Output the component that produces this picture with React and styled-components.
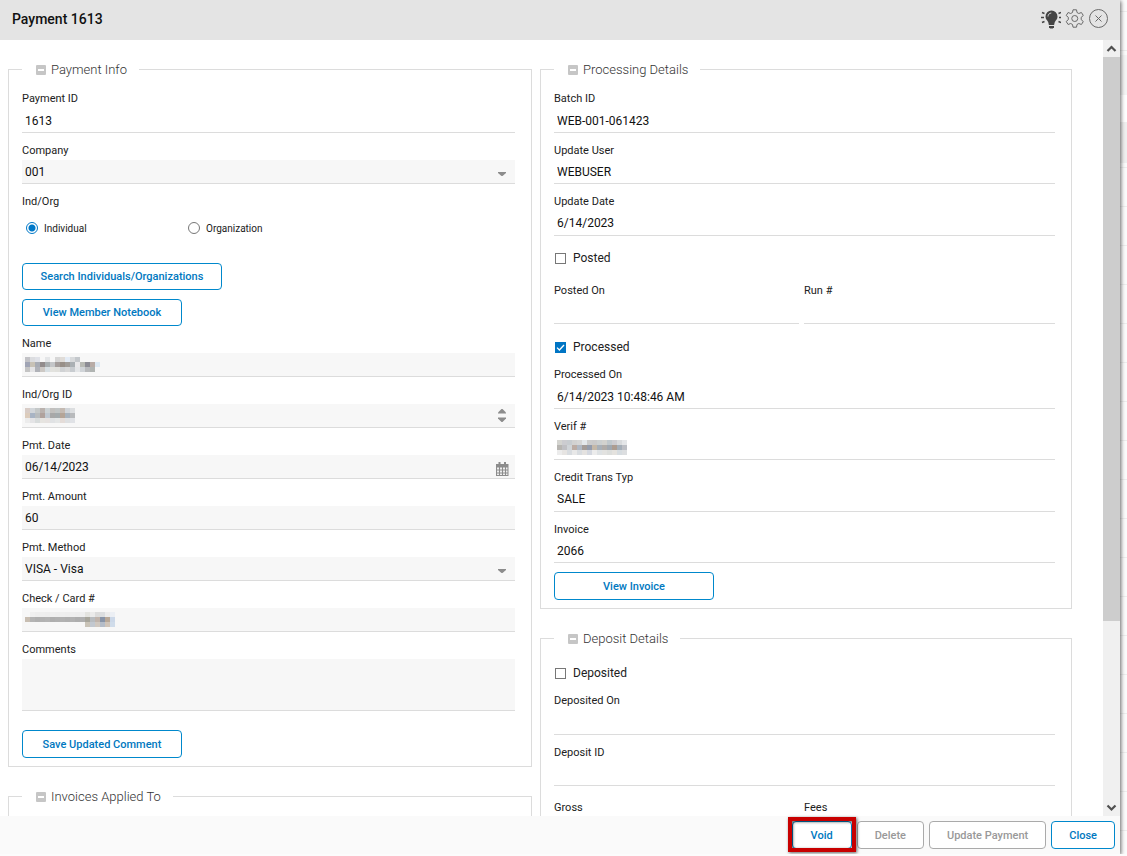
import React from 'react'
import styled, { createGlobalStyle, css } from 'styled-components'

const GlobalStyle = createGlobalStyle`
*{box-sizing:border-box;}
body{
  margin:0;
  overflow:hidden;
  background:
    linear-gradient(transparent 55px,#f5f5f5 55px,#f5f5f5 95px,#fff 95px,#fff 122px,#f0f0f0 122px,#f0f0f0 163px,transparent 163px),
    repeating-linear-gradient(#eee 0,#eee 1px,#fcfcfc 1px,#fcfcfc 39px) 0 11px;
  font-family:Roboto, sans-serif;
  color:#212121;
}
button,input,select,textarea{font-family:inherit;}
`;

const Dialog = styled.div`
display:flex;
flex-direction:column;
height:calc(100vh - 2px);
margin-right:7px;
background-color:#fff;
box-shadow:1px 1px 4px rgba(0,0,0,0.6);
`;

const Header = styled.header`
display:flex;
align-items:center;
justify-content:space-between;
flex:none;
height:40px;
padding:0 11px 2px 12px;
background-color:#e4e4e4;
`;

const Title = styled.h1`
margin:0;
font-size:14px;
font-weight:500;
color:#111;
`;

const Tools = styled.div`
display:flex;
gap:4px;
`;

const IconButton = styled.button`
display:flex;
padding:0;
border:0;
background:none;
cursor:pointer;
`;

const Body = styled.div`
display:flex;
flex:1;
min-height:0;
`;

const Content = styled.main`
display:grid;
grid-template-columns:524fr 532fr;
align-items:start;
gap:8px;
flex:1;
padding:20px 31px 0 8px;
overflow:hidden;
`;

const Column = styled.div`
display:flex;
flex-direction:column;
gap:20px;
`;

const Section = styled.fieldset`
min-width:0;
margin:0;
padding:2px 16px 8px 13px;
border:1px solid #dcdcdc;
`;

const Legend = styled.legend`
display:flex;
align-items:center;
gap:5px;
height:19px;
padding:0 12px 0 14px;
font-size:13px;
font-weight:300;
color:#333;
`;

const Field = styled.div`
position:relative;
padding-top:10px;
`;

const Label = styled.label`
display:block;
margin-bottom:${(props)=>props.$roomy ? '2px' : '1px'};
font-size:11px;
line-height:16px;
`;

const control = css`
display:block;
width:100%;
height:${(props)=>props.$tall ? '25px' : '24px'};
padding:0 3px;
border:0;
border-bottom:1px solid #dcdcdc;
border-radius:0;
outline:0;
background-color:${(props)=>props.$filled ? '#f7f7f7' : 'transparent'};
font-size:12px;
color:#111;
`;

const Input = styled.input`${control}`;

const Select = styled.select`
${control}
appearance:none;
`;

const TextArea = styled.textarea`
${control}
height:52px;
resize:none;
`;

const FieldIcon = styled.span`
position:absolute;
right:6px;
bottom:0;
display:flex;
align-items:center;
height:20px;
pointer-events:none;
`;

const MaskImage = styled.svg`
position:absolute;
left:3px;
bottom:5px;
display:block;
`;

const RadioLabel = styled.div`
padding-top:10px;
font-size:11px;
line-height:16px;
`;

const RadioGroup = styled.div`
display:grid;
grid-template-columns:162px 1fr;
height:36px;
margin-bottom:17px;
padding-left:4px;
align-items:center;
`;

const Option = styled.label`
display:flex;
align-items:center;
gap:6px;
font-size:10px;
`;

const Radio = styled.input`
appearance:none;
width:12px;
height:12px;
margin:0;
border:1px solid #777;
border-radius:50%;
&:checked{
  border-color:#0078c8;
  background:radial-gradient(circle,#0078c8 3px,#fff 4px);
}
`;

const Tick = styled.label`
display:flex;
align-items:center;
gap:7px;
margin-bottom:${(props)=>props.$roomy ? '5px' : '0'};
padding:${(props)=>props.$roomy ? '12px' : '13px'} 0 0 1px;
font-size:12px;
line-height:20px;
`;

const CheckBox = styled.input`
appearance:none;
width:11px;
height:11px;
margin:0;
border:1px solid #777;
&:checked{
  border-color:#0075c4;
  background:#0075c4 url("data:image/svg+xml,%3Csvg xmlns='http://www.w3.org/2000/svg' viewBox='0 0 9 9'%3E%3Cpath d='M1 4.6 3.4 7 8 2' fill='none' stroke='white' stroke-width='1.3'/%3E%3C/svg%3E") center / 9px no-repeat;
}
`;

const Pair = styled.div`
display:grid;
grid-template-columns:245fr 251fr;
gap:5px;
`;

const Button = styled.button`
display:block;
min-width:${(props)=>props.$wide ? '200px' : '160px'};
height:${(props)=>props.$tall ? '28px' : '27px'};
padding:0;
border:1px solid #0088cc;
border-radius:4px;
background-color:#fff;
font-size:11px;
font-weight:500;
color:#0078c0;
cursor:pointer;
&:disabled{
  border-color:#aaa;
  color:#999;
  cursor:default;
}
`;

const Actions = styled.div`
display:flex;
flex-direction:column;
align-items:flex-start;
gap:9px;
margin-top:${(props)=>props.$top || '0'};
`;

const Totals = styled(Pair)`
padding-top:4px;
`;

const Scrollbar = styled.div`
display:flex;
flex-direction:column;
flex:none;
width:17px;
background-color:#f0f0f0;
`;

const ScrollArrow = styled.button`
display:flex;
align-items:center;
justify-content:center;
height:17px;
padding:0;
border:0;
background:none;
`;

const Track = styled.div`
flex:1;
`;

const Thumb = styled.div`
height:76%;
background-color:#cdcdcd;
`;

const Footer = styled.footer`
display:flex;
justify-content:flex-end;
gap:5px;
flex:none;
height:38px;
padding:5px 5px 0;
background-color:#fafafa;
`;

const FooterButton = styled(Button)`
min-width:60px;
height:28px;
padding:0 17px;
`;

const Highlight = styled.div`
position:relative;
height:28px;
&::after{
  content:'';
  position:absolute;
  inset:-4px -4px -3px;
  border:4px solid #c80000;
  box-shadow:1px 1px 3px rgba(0,0,0,0.6), inset 1px 1px 3px rgba(0,0,0,0.6);
  pointer-events:none;
}
`;

function BulbIcon() {
  return (
    <svg width="22" height="20" viewBox="0 0 22 20">
      <path d="M12.500 1.500a6 6 0 0 0-6 6c0 2.600 1.500 3.600 2.500 5.200.5.900.6 2.300.9 3.300h5.200c.3-1 .4-2.400.9-3.300 1-1.600 2.500-2.600 2.500-5.200a6 6 0 0 0-6-6z" fill="#444" />
      <path d="M10 17h5v1.200l-1.200 1.300h-2.600L10 18.200z" fill="#444" />
      <path d="M9 7.500c0-2 1.300-3.300 3.300-3.500" fill="none" stroke="#ccc" />
      <path d="M2 8.500h3M3 3.500l2.500 1M3 13.500l2.500-1M20 8.500h3M19.500 4.500l2.500-1M19.500 12.500l2.500 1" fill="none" stroke="#444" strokeWidth="1.500" />
    </svg>
  )
}

function GearIcon() {
  return (
    <svg width="20" height="20" viewBox="0 0 20 20" fill="none" stroke="#6a6a6a">
      <path d="M8 .8h3.500l.5 2.700 1.800 1 2.600-1 1.900 3-2.100 1.800v2.400l2.100 1.800-1.900 3-2.600-1-1.800 1-.5 2.700H8l-.5-2.700-1.800-1-2.600 1-1.900-3 2.100-1.800V8.300L1.200 6.500l1.900-3 2.600 1 1.800-1z" strokeLinejoin="round" />
      <circle cx="9.750" cy="9.500" r="3" />
    </svg>
  )
}

function CloseIcon() {
  return (
    <svg width="20" height="20" viewBox="0 0 20 20" fill="none" stroke="#6a6a6a">
      <circle cx="9.500" cy="9.500" r="9" />
      <path d="M6.500 6.500l6 6M12.500 6.500l-6 6" />
    </svg>
  )
}

function Caret() {
  return (
    <svg width="14" height="6" viewBox="0 0 14 6"><path d="M3 1h8v1L7.500 5h-1L3 2z" fill="#8c8c8c" /></svg>
  )
}

function Spinner() {
  return (
    <svg width="14" height="18" viewBox="0 0 14 18" fill="#8c8c8c">
      <path d="M3 4.500v-1L6.500 0h1L11 3.500v1z" />
      <path d="M3 8.500h8v1L7.500 13h-1L3 9.500z" />
    </svg>
  )
}

function CalendarIcon() {
  return (
    <svg width="13" height="14" viewBox="0 0 13 14">
      <path d="M0 2h12.500v12H0z" fill="#8c8c8c" />
      <path d="M2.500 0h2v3h-2zM8 0h2v3H8z" fill="#8c8c8c" />
      <path d="M1 5.500h2v2H1zM4 5.500h2v2H4zM7 5.500h2v2H7zM10 5.500h1.500v2H10zM1 8.500h2v2H1zM4 8.500h2v2H4zM7 8.500h2v2H7zM10 8.500h1.500v2H10zM1 11.500h2V13H1zM4 11.500h2V13H4zM7 11.500h2V13H7zM10 11.500h1.500V13H10z" fill="#eee" />
    </svg>
  )
}

function Chevron({down}) {
  return (
    <svg width="11" height="8" viewBox="0 0 11 8">
      <path d={down ? 'M1.500 1.500l4 4 4-4' : 'M1.500 6l4-4 4 4'} fill="none" stroke="#505050" strokeWidth="2.200" />
    </svg>
  )
}

function Collapse() {
  return (
    <svg width="10" height="10" viewBox="0 0 10 10">
      <rect width="10" height="10" rx="1" fill="#c6c6c6" />
      <rect x="2" y="4" width="6" height="2" fill="#fff" />
    </svg>
  )
}

function Group({title,children}) {
  return (
    <Section>
      <Legend><Collapse />{title}</Legend>
      {children}
    </Section>
  )
}

// hidden values are drawn as 5px blocks
function Mask({rows}) {
  return (
    <MaskImage width={rows[1].length * 5} height="15" shapeRendering="crispEdges" aria-hidden="true">
      {rows.map((row,y)=>row.map((fill,x)=>(
        fill && <rect key={`${x}-${y}`} x={x * 5} y={y * 5} width="5" height="5" fill={`#${fill}`} />
      )))}
    </MaskImage>
  )
}

function TextField({id,label,value = '',filled,tall,roomy,mask,children}) {
  return (
    <Field>
      <Label htmlFor={id} $roomy={roomy}>{label}</Label>
      <Input id={id} defaultValue={value} $filled={filled} $tall={tall} />
      {mask && <Mask rows={mask} />}
      {children && <FieldIcon>{children}</FieldIcon>}
    </Field>
  )
}

function SelectField({id,label,value}) {
  return (
    <Field>
      <Label htmlFor={id}>{label}</Label>
      <Select id={id} $filled>
        <option>{value}</option>
      </Select>
      <FieldIcon><Caret /></FieldIcon>
    </Field>
  )
}

const masks = {
  name:[
    ['c2c2c6','dcdde0','e0e2e8','','e4e6e8','','d6d6d6','e0dcd8','e4ecf6','d8dadc','c4c8cc'],
    ['a0a4b4','c8c2b6','a8acb4','928c8c','a8aeb0','c4c6c8','a49e9c','988f88','a09c98','aab0b4','e8e8ea','b8bab4','8c8c94','b8aca6','dce8f2'],
    ['c4c4c4','e4e4e6','b0b2b8','ccc8c4','d8e0e4','e2e2de','e0e0dc','d0d2d4','d8d8d8','c8ccd0','e4e6e8','d0d4d8','b8babc','b0b4b2'],
  ],
  indOrg:[
    ['d8ccc6','d2d6da','c4c8c8','bab2ae','ccd2d4','c2c0be','c0c4c4','c4bab2','d0d4d8','dcdee0'],
    ['dcccbc','a8b4c4','b8bcbe','b0a29c','c0c8d0','a8a8a8','a4aaac','b4a496','a8b2bc','b8babc'],
    ['ececec','e4e4e6','d8dcdc','e6e4e0','e6e2e0','e0e2e4','e4e6e6','e4dcd8','dee0e2','e0e2e6'],
  ],
  card:[
    ['','f0f0f0','eeeeee','efefef','eeeeee','efefef','eeeeee','efefef','eeeeee','efefef','eeeeee','efefef','e4e4e0','ebebeb','dcdcdc','dcdee0','ececec','eceff4'],
    ['c8beb2','b4b4b4','b0b0b0','b2b2b2','b4b4b4','aeaeae','b0b0b0','b2b2b2','b0b0b0','b2b2b2','aeaeae','b0b0b0','a8a69c','b8bcc0','c0b4ac','8894a8','b8a898','ccd8e8'],
    ['','','','','','','','','','','','','cac4b8','c2c8d0','d0c8c0','b4bcc8','d0c4b8','d0dcea'],
  ],
  verif:[
    ['d4d4d0','ccccd0','c8ccd0','d2d2d2','d6d6d6','e4e8ec','cccccc','cacaca','ccd0d0','d2d2ce','c0c8cc','ccccd0','d8dadc','e4e6e8'],
    ['b8b6b2','c0c0c4','d0d4d8','bcaca4','b0b8c4','a49c98','949cac','c4b8a8','a8b0b8','b0aca8','a0a8b0','ac9c90','a4aeb8','bcbec4'],
    ['ececec','e6e4e2','d8dce0','e8e8e8','d8dce0','e4e2e0','d4d8e0','ececec','dee2e4','e2e2e0','dcdedc','e4e2de','d6dce0','dcdee0'],
  ],
}

export default function App() {
  return (
    <>
      <GlobalStyle />
      <Dialog role="dialog" aria-label="Payment 1613">
        <Header>
          <Title>Payment 1613</Title>
          <Tools>
            <IconButton aria-label="Tips"><BulbIcon /></IconButton>
            <IconButton aria-label="Settings"><GearIcon /></IconButton>
            <IconButton aria-label="Close window"><CloseIcon /></IconButton>
          </Tools>
        </Header>
        <Body>
          <Content>
            <Column>
              <Group title="Payment Info">
                <TextField id="paymentId" label="Payment ID" value="1613" roomy />
                <SelectField id="company" label="Company" value="001" />
                <RadioLabel id="indOrg">Ind/Org</RadioLabel>
                <RadioGroup role="radiogroup" aria-labelledby="indOrg">
                  <Option><Radio type="radio" name="kind" defaultChecked />Individual</Option>
                  <Option><Radio type="radio" name="kind" />Organization</Option>
                </RadioGroup>
                <Actions>
                  <Button $wide>Search Individuals/Organizations</Button>
                  <Button>View Member Notebook</Button>
                </Actions>
                <TextField id="name" label="Name" filled mask={masks.name} />
                <TextField id="indOrgId" label="Ind/Org ID" filled mask={masks.indOrg}><Spinner /></TextField>
                <TextField id="date" label="Pmt. Date" value="06/14/2023" filled><CalendarIcon /></TextField>
                <TextField id="amount" label="Pmt. Amount" value="60" filled />
                <SelectField id="method" label="Pmt. Method" value="VISA - Visa" />
                <TextField id="card" label="Check / Card #" filled mask={masks.card} />
                <Field>
                  <Label htmlFor="comments">Comments</Label>
                  <TextArea id="comments" $filled />
                </Field>
                <Actions $top="19px">
                  <Button $tall>Save Updated Comment</Button>
                </Actions>
              </Group>
              <Group title="Invoices Applied To" />
            </Column>
            <Column>
              <Group title="Processing Details">
                <TextField id="batch" label="Batch ID" value="WEB-001-061423" roomy />
                <TextField id="user" label="Update User" value="WEBUSER" />
                <TextField id="updated" label="Update Date" value="6/14/2023" tall />
                <Tick $roomy><CheckBox type="checkbox" />Posted</Tick>
                <Pair>
                  <TextField id="postedOn" label="Posted On" />
                  <TextField id="run" label="Run #" />
                </Pair>
                <Tick><CheckBox type="checkbox" defaultChecked />Processed</Tick>
                <TextField id="processedOn" label="Processed On" value="6/14/2023 10:48:46 AM" roomy />
                <TextField id="verif" label="Verif #" mask={masks.verif} />
                <TextField id="transType" label="Credit Trans Typ" value="SALE" tall />
                <TextField id="invoice" label="Invoice" value="2066" />
                <Actions $top="9px">
                  <Button $tall>View Invoice</Button>
                </Actions>
              </Group>
              <Group title="Deposit Details">
                <Tick><CheckBox type="checkbox" />Deposited</Tick>
                <TextField id="depositedOn" label="Deposited On" roomy />
                <TextField id="depositId" label="Deposit ID" />
                <Totals>
                  <TextField id="gross" label="Gross" />
                  <TextField id="fees" label="Fees" />
                </Totals>
              </Group>
            </Column>
          </Content>
          <Scrollbar>
            <ScrollArrow aria-label="Scroll up"><Chevron /></ScrollArrow>
            <Track><Thumb /></Track>
            <ScrollArrow aria-label="Scroll down"><Chevron down /></ScrollArrow>
          </Scrollbar>
        </Body>
        <Footer>
          <Highlight><FooterButton>Void</FooterButton></Highlight>
          <FooterButton disabled>Delete</FooterButton>
          <FooterButton disabled>Update Payment</FooterButton>
          <FooterButton>Close</FooterButton>
        </Footer>
      </Dialog>
    </>
  )
}
